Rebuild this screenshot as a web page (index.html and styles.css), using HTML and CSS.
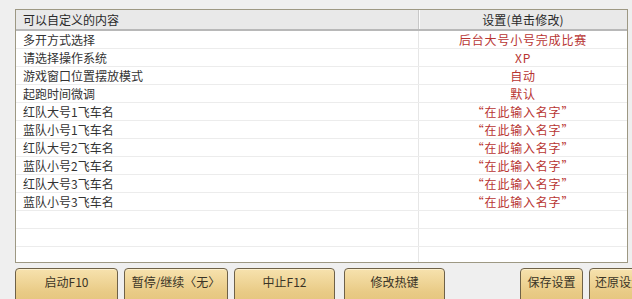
FILE: index.html
```html
<!DOCTYPE html>
<html lang="zh">
<head>
<meta charset="utf-8">
<link rel="stylesheet" href="styles.css">
</head>
<body>
<div class="page">
  <div class="grid">
    <div class="row head">
      <div class="c1">可以自定义的内容</div>
      <div class="c2">设置(单击修改)</div>
    </div>
    <div class="row"><div class="c1">多开方式选择</div><div class="c2">后台大号小号完成比赛</div></div>
    <div class="row"><div class="c1">请选择操作系统</div><div class="c2">XP</div></div>
    <div class="row"><div class="c1">游戏窗口位置摆放模式</div><div class="c2">自动</div></div>
    <div class="row"><div class="c1">起跑时间微调</div><div class="c2">默认</div></div>
    <div class="row"><div class="c1">红队大号1飞车名</div><div class="c2">“在此输入名字”</div></div>
    <div class="row"><div class="c1">蓝队小号1飞车名</div><div class="c2">“在此输入名字”</div></div>
    <div class="row"><div class="c1">红队大号2飞车名</div><div class="c2">“在此输入名字”</div></div>
    <div class="row"><div class="c1">蓝队小号2飞车名</div><div class="c2">“在此输入名字”</div></div>
    <div class="row"><div class="c1">红队大号3飞车名</div><div class="c2">“在此输入名字”</div></div>
    <div class="row"><div class="c1">蓝队小号3飞车名</div><div class="c2">“在此输入名字”</div></div>
    <div class="row"><div class="c1"></div><div class="c2"></div></div>
    <div class="row"><div class="c1"></div><div class="c2"></div></div>
    <div class="row"><div class="c1"></div><div class="c2"></div></div>
  </div>
  <div class="buttons">
    <div class="btn b1">启动F10</div>
    <div class="btn b2">暂停/继续〈无〉</div>
    <div class="btn b3">中止F12</div>
    <div class="btn b4">修改热键</div>
    <div class="btn b5">保存设置</div>
    <div class="btn b6">还原设置</div>
  </div>
</div>
</body>
</html>
```

FILE: styles.css
```css
html, body {
  margin: 0;
  padding: 0;
  background: #efefef;
  overflow: hidden;
}
.page {
  width: 632px;
  height: 299px;
  padding: 9px 0 0 15px;
  box-sizing: border-box;
  font-family: "Noto Sans CJK SC", "Noto Sans", sans-serif;
  font-size: 12px;
  color: #333;
  overflow: hidden;
}
.grid {
  width: 613px;
  height: 254px;
  box-sizing: border-box;
  border: 1px solid #9d9883;
  background: #fff;
  overflow: hidden;
}
.row {
  display: flex;
  height: 18px;
  box-sizing: border-box;
  border-bottom: 1px solid #ececec;
  line-height: 17px;
}
.row.head {
  height: 21px;
  line-height: 19px;
  background: #e9e9e9;
  border-bottom: 2px solid #b8b8b8;
  font-size: 12px;
  color: #2a2a2a;
}
.c1 {
  width: 402px;
  padding-left: 7px;
  box-sizing: border-box;
  white-space: nowrap;
}
.c2 {
  flex: 1;
  text-align: center;
  border-left: 1px solid #e6e6e6;
  color: #b83532;
  letter-spacing: 0.8px;
  white-space: nowrap;
}
.head .c2 {
  color: #2a2a2a;
  border-left: 1px solid #c8c8c8;
  box-shadow: inset 1px 0 0 #fbfbfb;
  letter-spacing: 0.2px;
}
.buttons {
  display: flex;
  margin-top: 5px;
  height: 40px;
  white-space: nowrap;
}
.btn {
  flex: none;
  height: 40px;
  box-sizing: border-box;
  border: 1px solid #6e6148;
  border-radius: 4px;
  background: linear-gradient(#f7e2ae, #e9cb86 60%, #e3c27a);
  box-shadow: inset 0 1px 0 #fbefcc;
  text-align: center;
  line-height: 26px;
  color: #3a3426;
  font-size: 12px;
}
.b1 { width: 103px; }
.b2 { width: 104px; margin-left: 6px; }
.b3 { width: 101px; margin-left: 6px; }
.b4 { width: 101px; margin-left: 9px; }
.b5 { width: 63px; margin-left: 75px; }
.b6 { width: 63px; margin-left: 6px; text-align: left; padding-left: 5px; }
```
